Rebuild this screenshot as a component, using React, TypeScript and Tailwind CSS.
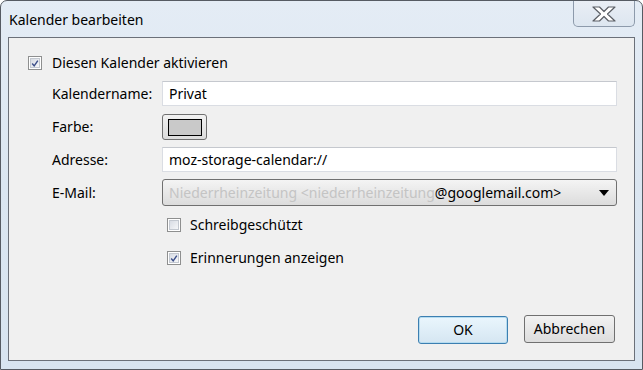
import React from "react";

const font = { fontFamily: '"Noto Sans", "Open Sans", sans-serif' };

function Check({ checked }: { checked: boolean }) {
  return (
    <span className="flex h-[14px] w-[14px] items-center justify-center border border-[#8e8f8f] bg-white p-[1px]">
      <span className="flex h-full w-full items-center justify-center border border-[#c3c8d0] bg-gradient-to-br from-[#d8dce4] to-[#f6f7f9]">
        {checked && (
          <svg width="10" height="9" viewBox="0 0 10 9">
            <path d="M1.5 4.5 L4 7.5 L8.5 1" fill="none" stroke="#3b4e89" strokeWidth="1.8" />
          </svg>
        )}
      </span>
    </span>
  );
}

function Field({ value }: { value: string }) {
  return (
    <div className="flex h-[25px] items-center border border-[#dadde3] border-t-[#c5c8ce] bg-white pl-[6px] text-black">
      {value}
    </div>
  );
}

export default function App() {
  return (
    <div
      style={font}
      className="flex h-[370px] w-[643px] flex-col overflow-hidden rounded-t-[7px] border border-[#565b63] bg-gradient-to-b from-[#e4ecf5] via-[#dbe6f1] to-[#d8e4f0] text-[14px] leading-[20px]"
    >
      <div className="flex h-[36px] items-start justify-between">
        <span className="mt-[9px] ml-[8px] text-black">Kalender bearbeiten</span>
        <div className="mr-[7px] flex h-[26px] w-[62px] items-center justify-center rounded-b-[5px] border border-t-0 border-[#8d9aab] bg-gradient-to-b from-[#e9eef5] to-[#dde6f0]">
          <svg width="28" height="18" viewBox="0 0 28 18">
            <path
              d="M3 2 H9.5 L14 6.5 L18.5 2 H25 L17.5 9 L25 16 H18.5 L14 11.5 L9.5 16 H3 L10.5 9 Z"
              fill="#ffffff"
              stroke="#5b5f66"
              strokeWidth="1.2"
              strokeLinejoin="round"
            />
          </svg>
        </div>
      </div>

      <div className="mx-[7px] mb-[8px] flex flex-1 flex-col border border-[#6b7079] bg-[#f0f0f0] text-black">
        <div className="mt-[15px] ml-[19px] flex h-[20px] items-center gap-[10px]">
          <Check checked />
          <span>Diesen Kalender aktivieren</span>
        </div>

        <div className="mt-[8px] ml-[43px] grid grid-cols-[110px_455px] items-center">
          <span>Kalendername:</span>
          <Field value="Privat" />

          <span className="mt-[8px]">Farbe:</span>
          <div className="mt-[8px] flex h-[26px] w-[45px] items-center justify-center rounded-[3px] border border-[#707070] bg-gradient-to-b from-[#f2f2f2] to-[#dcdcdc]">
            <span className="h-[17px] w-[34px] border border-black bg-[#c9c9c9]" />
          </div>

          <span className="mt-[7px]">Adresse:</span>
          <div className="mt-[7px]">
            <Field value="moz-storage-calendar://" />
          </div>

          <span className="mt-[7px]">E-Mail:</span>
          <div className="mt-[7px] flex h-[27px] items-center justify-between rounded-[3px] border border-[#707070] bg-gradient-to-b from-[#f4f4f4] to-[#dcdcdc] pr-[7px] pl-[6px]">
            <span>
              <span className="text-[#c4c4c4]">Niederrheinzeitung &lt;niederrheinzeitung</span>
              <span className="text-black">@googlemail.com&gt;</span>
            </span>
            <svg width="10" height="6" viewBox="0 0 10 6">
              <path d="M0 0 H10 L5 6 Z" fill="#000" />
            </svg>
          </div>

          <span />
          <div className="mt-[9px] ml-[5px] flex h-[20px] items-center gap-[9px]">
            <Check checked={false} />
            <span>Schreibgeschützt</span>
          </div>

          <span />
          <div className="mt-[13px] ml-[5px] flex h-[20px] items-center gap-[9px]">
            <Check checked />
            <span>Erinnerungen anzeigen</span>
          </div>
        </div>

        <div className="mt-auto mr-[19px] mb-[16px] flex justify-end gap-[16px]">
          <button className="h-[28px] w-[90px] rounded-[3px] border border-[#3c7fb1] bg-gradient-to-b from-[#eaf6fd] to-[#d5e6f2] shadow-[inset_0_0_0_1px_#b6dcf0]">
            OK
          </button>
          <button className="-mt-[1px] h-[28px] w-[91px] rounded-[3px] border border-[#707070] bg-gradient-to-b from-[#f2f2f2] to-[#dddddd]">
            Abbrechen
          </button>
        </div>
      </div>
    </div>
  );
}
